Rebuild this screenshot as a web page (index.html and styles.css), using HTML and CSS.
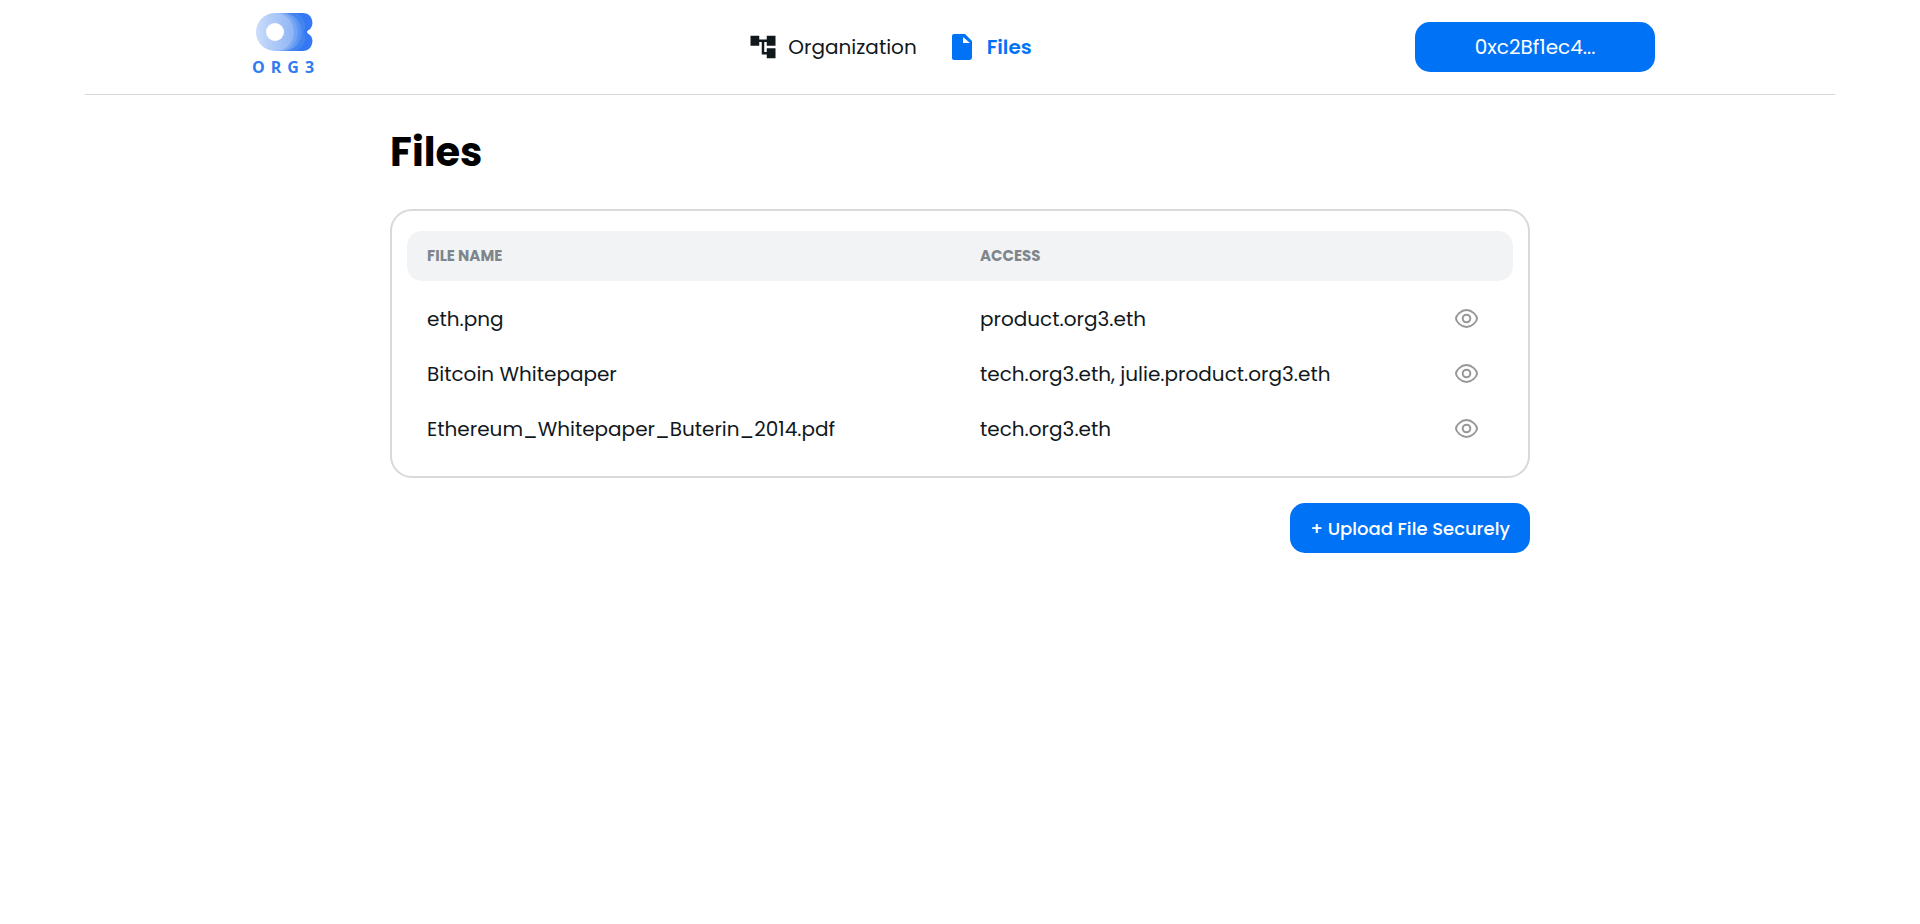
FILE: index.html
```html
<!DOCTYPE html>
<html lang="en">
<head>
  <meta charset="utf-8">
  <meta name="viewport" content="width=device-width, initial-scale=1">
  <title>Org3 – Files</title>
  <link rel="stylesheet" href="styles.css">
</head>
<body>
  <header class="topbar">
    <a class="brand" href="#" aria-label="Org3 home">
      <svg class="brand-mark" viewBox="-2 0 62 40" aria-hidden="true">
        <defs>
          <linearGradient id="g1" x1="0" x2="1"><stop offset="0" stop-color="#c9dcfb"/><stop offset="1" stop-color="#8fb4f5"/></linearGradient>
          <linearGradient id="g2" x1="0" x2="1"><stop offset="0" stop-color="#b9d0fa"/><stop offset="1" stop-color="#6e9ff3"/></linearGradient>
          <linearGradient id="g3" x1="0" x2="1"><stop offset="0" stop-color="#9cbdf7"/><stop offset="1" stop-color="#5490f0"/></linearGradient>
        </defs>
        <path fill="#3478f6" d="M20 1H49a9.500 9.500 0 0 1 5 17.500q-2 1.500 0 3A9.500 9.500 0 0 1 49 39H20z"/>
        <path fill="#4285f0" d="M20 1H42q7 3 9 11 1 4-1 8 2 4 1 8-2 8-9 11H20z"/>
        <circle cx="29" cy="20" r="19" fill="url(#g3)"/>
        <circle cx="25" cy="20" r="19" fill="url(#g2)"/>
        <circle cx="21" cy="20" r="19" fill="url(#g1)"/>
        <circle cx="21" cy="20" r="9" fill="#fff"/>
      </svg>
      <span class="brand-name">ORG3</span>
    </a>
    <nav class="nav">
      <a class="nav-link" href="#">
        <svg class="nav-icon" viewBox="0 0 24 24" aria-hidden="true"><path fill="currentColor" d="M22 11V3h-7v3H9V3H2v8h7V8h2v10h4v3h7v-8h-7v3h-2V8h2v3z"/></svg>
        Organization
      </a>
      <a class="nav-link active" href="#" aria-current="page">
        <svg class="nav-icon" viewBox="0 0 30 30" aria-hidden="true"><path fill="currentColor" d="M7 2h11l7 7v16a3 3 0 0 1-3 3H7a2 2 0 0 1-2-2V4a2 2 0 0 1 2-2z"/><path fill="#fff" d="M16 5v6h7z"/></svg>
        Files
      </a>
    </nav>
    <button class="button wallet" type="button">0xc2Bf1ec4...</button>
  </header>
  <main class="content">
    <h1 class="title">Files</h1>
    <section class="card">
      <table class="files">
        <thead>
          <tr><th class="col-name" scope="col">FILE NAME</th><th scope="col">ACCESS</th><th class="col-view"></th></tr>
        </thead>
        <tbody>
          <tr><td>eth.png</td><td>product.org3.eth</td>
            <td><button class="view" type="button" aria-label="View eth.png"><svg class="eye" viewBox="0 0 23 19"><path d="M1 9.500C1 6.500 6 1 11.500 1S22 6.500 22 9.500 17 18 11.500 18 1 12.500 1 9.500z"/><circle cx="11.500" cy="9.500" r="3.800"/></svg></button></td></tr>
          <tr><td>Bitcoin Whitepaper</td><td>tech.org3.eth, julie.product.org3.eth</td>
            <td><button class="view" type="button" aria-label="View Bitcoin Whitepaper"><svg class="eye" viewBox="0 0 23 19"><path d="M1 9.500C1 6.500 6 1 11.500 1S22 6.500 22 9.500 17 18 11.500 18 1 12.500 1 9.500z"/><circle cx="11.500" cy="9.500" r="3.800"/></svg></button></td></tr>
          <tr><td>Ethereum_Whitepaper_Buterin_2014.pdf</td><td>tech.org3.eth</td>
            <td><button class="view" type="button" aria-label="View Ethereum_Whitepaper_Buterin_2014.pdf"><svg class="eye" viewBox="0 0 23 19"><path d="M1 9.500C1 6.500 6 1 11.500 1S22 6.500 22 9.500 17 18 11.500 18 1 12.500 1 9.500z"/><circle cx="11.500" cy="9.500" r="3.800"/></svg></button></td></tr>
        </tbody>
      </table>
    </section>
    <button class="button upload" type="button">+ Upload File Securely</button>
  </main>
</body>
</html>
```
FILE: styles.css
```css
* {
  box-sizing: border-box;
}

body {
  margin: 0;
  background: #fff;
  color: #11181c;
  font-family: Poppins, Inter, sans-serif;
  font-size: 20px;
  line-height: 30px;
}

.topbar {
  display: flex;
  align-items: center;
  justify-content: space-between;
  max-width: 1750px;
  margin: 0 auto;
  padding: 12px 180px 12px 167px;
  border-bottom: 1px solid #d7d7d7;
}

.brand {
  display: flex;
  flex-direction: column;
  gap: 4px;
  width: 113px;
  padding-bottom: 4px;
  color: #2f7bf2;
  text-decoration: none;
}

.brand-mark {
  width: 62px;
  height: 40px;
}

.brand-name {
  font: bold 16px/22px "Open Sans", sans-serif;
  letter-spacing: 6px;
}

.nav {
  display: flex;
  gap: 30px;
}

.nav-link {
  display: flex;
  align-items: center;
  gap: 10px;
  color: inherit;
  text-decoration: none;
}

.nav-link.active {
  color: #0072f5;
  font-weight: 600;
}

.nav-icon {
  width: 30px;
  height: 30px;
}

.button {
  width: 240px;
  height: 50px;
  border: 0;
  border-radius: 15px;
  background: #0072f5;
  color: #fff;
  font-family: inherit;
  cursor: pointer;
}

.wallet {
  font-size: 20px;
}

.content {
  display: flex;
  flex-direction: column;
  max-width: 1140px;
  margin: 0 auto;
}

.title {
  margin: 27px 0;
  color: #000;
  font-size: 40px;
  line-height: 60px;
}

.card {
  padding: 20px 15px;
  border: 2px solid #d9d9d9;
  border-radius: 22px;
}

.files {
  width: 100%;
  table-layout: fixed;
  border-collapse: separate;
  border-spacing: 0;
}

.files tbody::before {
  display: block;
  height: 10px;
  content: "";
}

.col-name {
  width: 50%;
}

.col-view {
  width: 94px;
}

.files th {
  height: 50px;
  padding: 0 20px;
  background: #f1f3f5;
  color: #7e868c;
  font-size: 15px;
  line-height: 20px;
  text-align: left;
}

.files th:first-child {
  border-radius: 15px 0 0 15px;
}

.files th:last-child {
  border-radius: 0 15px 15px 0;
}

.files td {
  height: 55px;
  padding: 0 20px;
}

.files td:last-child {
  padding: 0 35px 0 0;
}

.view {
  display: flex;
  margin-left: auto;
  padding: 0;
  border: 0;
  background: none;
  color: #979797;
  cursor: pointer;
}

.eye {
  width: 23px;
  height: 19px;
  fill: none;
  stroke: currentColor;
  stroke-width: 2;
}

.upload {
  align-self: flex-end;
  margin-top: 25px;
  font-size: 18px;
  font-weight: 500;
}
```
